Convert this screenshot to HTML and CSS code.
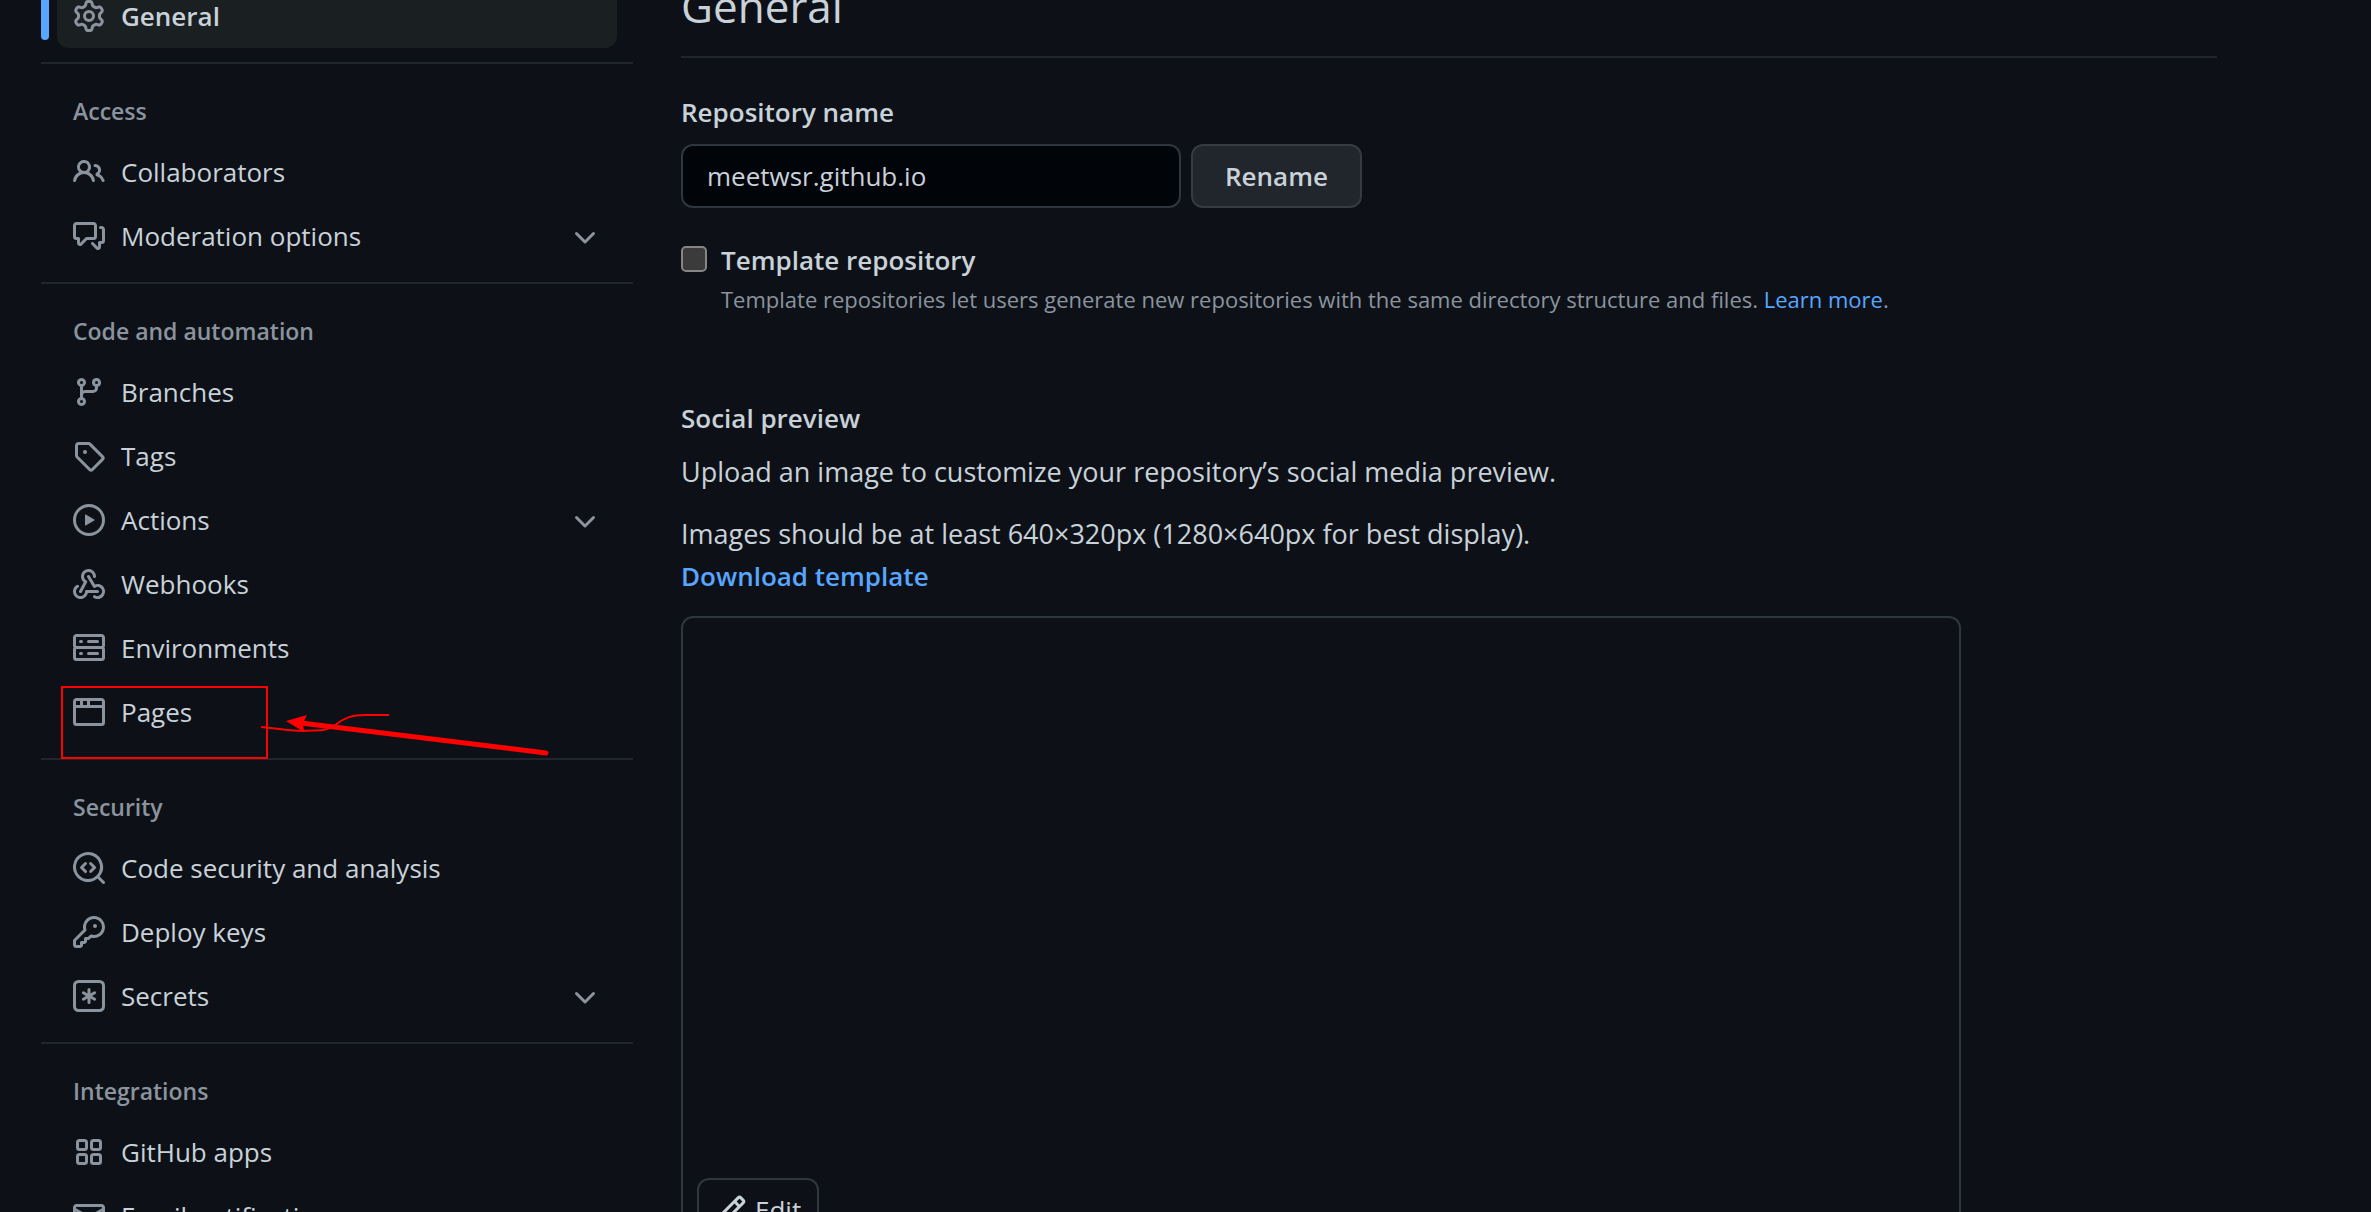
FILE: index.html
```html
<!DOCTYPE html>
<html lang="en">
<head>
<meta charset="utf-8">
<title>General settings</title>
<link rel="stylesheet" href="styles.css">
</head>
<body>
<div class="page">
  <nav class="sidebar" aria-label="Repository settings">
    <ul class="nav-list">
      <li class="nav-row nav-row-current"><a class="nav-item" href="#general" aria-current="page"><svg class="icon" viewBox="0 0 16 16"><path d="M8 0a8.2 8.2 0 0 1 .701.031C9.444.095 9.99.645 10.16 1.29l.288 1.107c.018.066.079.158.212.224.231.114.454.243.668.386.123.082.233.09.299.071l1.103-.303c.644-.176 1.392.021 1.82.63.27.385.506.792.704 1.218.315.675.111 1.422-.364 1.891l-.814.806c-.049.048-.098.147-.088.294.016.257.016.515 0 .772-.01.147.038.246.088.294l.814.806c.475.469.679 1.216.364 1.891a7.977 7.977 0 0 1-.704 1.217c-.428.61-1.176.807-1.82.63l-1.102-.302c-.067-.019-.177-.011-.3.071a5.909 5.909 0 0 1-.668.386c-.133.066-.194.158-.211.224l-.29 1.106c-.168.646-.715 1.196-1.458 1.26a8.006 8.006 0 0 1-1.402 0c-.743-.064-1.289-.614-1.458-1.26l-.289-1.106c-.018-.066-.079-.158-.212-.224a5.738 5.738 0 0 1-.668-.386c-.123-.082-.233-.09-.299-.071l-1.103.303c-.644.176-1.392-.021-1.82-.63a8.12 8.12 0 0 1-.704-1.218c-.315-.675-.111-1.422.363-1.891l.815-.806c.05-.048.098-.147.088-.294a6.214 6.214 0 0 1 0-.772c.01-.147-.038-.246-.088-.294l-.815-.806C.635 6.045.431 5.298.746 4.623a7.92 7.92 0 0 1 .704-1.217c.428-.61 1.176-.807 1.82-.63l1.102.302c.067.019.177.011.3-.071.214-.143.437-.272.668-.386.133-.066.194-.158.211-.224l.29-1.106C6.009.645 6.556.095 7.299.03 7.53.01 7.764 0 8 0Zm-.571 1.525c-.036.003-.108.036-.137.146l-.289 1.105c-.147.561-.549.967-.998 1.189-.173.086-.34.183-.5.29-.417.278-.97.423-1.529.27l-1.103-.303c-.109-.03-.175.016-.195.045-.22.312-.412.644-.573.99-.014.031-.021.11.059.19l.815.806c.411.406.562.957.53 1.456a4.709 4.709 0 0 0 0 .582c.032.499-.119 1.05-.53 1.456l-.815.806c-.081.08-.073.159-.059.19.162.346.353.677.573.989.02.03.085.076.195.046l1.102-.303c.56-.153 1.113-.008 1.53.27.161.107.328.204.501.29.447.222.85.629.997 1.189l.289 1.105c.029.109.101.143.137.146a6.6 6.6 0 0 0 1.142 0c.036-.003.108-.036.137-.146l.289-1.105c.147-.561.549-.967.998-1.189.173-.086.34-.183.5-.29.417-.278.97-.423 1.529-.27l1.103.303c.109.029.175-.016.195-.045.22-.313.411-.644.573-.99.014-.031.021-.11-.059-.19l-.815-.806c-.411-.406-.562-.957-.53-1.456a4.709 4.709 0 0 0 0-.582c-.032-.499.119-1.05.53-1.456l.815-.806c.081-.08.073-.159.059-.19a6.464 6.464 0 0 0-.573-.989c-.02-.03-.085-.076-.195-.046l-1.102.303c-.56.153-1.113.008-1.53-.27a4.44 4.44 0 0 0-.501-.29c-.447-.222-.85-.629-.997-1.189l-.289-1.105c-.029-.11-.101-.143-.137-.146a6.6 6.6 0 0 0-1.142 0ZM11 8a3 3 0 1 1-6 0 3 3 0 0 1 6 0ZM9.5 8a1.5 1.5 0 1 0-3.001.001A1.5 1.5 0 0 0 9.5 8Z"/></svg><span>General</span></a></li>
    </ul>
    <section class="nav-group">
      <h3 class="nav-title">Access</h3>
      <ul class="nav-list">
        <li class="nav-row"><a class="nav-item" href="#collaborators"><svg class="icon" viewBox="0 0 16 16"><path d="M2 5.5a3.5 3.5 0 1 1 5.898 2.549 5.508 5.508 0 0 1 3.034 4.084.75.75 0 1 1-1.482.235 4 4 0 0 0-7.9 0 .75.75 0 0 1-1.482-.236A5.507 5.507 0 0 1 3.102 8.05 3.493 3.493 0 0 1 2 5.5ZM11 4a3.001 3.001 0 0 1 2.22 5.018 5.01 5.01 0 0 1 2.56 3.012.749.749 0 0 1-.885.954.752.752 0 0 1-.549-.514 3.507 3.507 0 0 0-2.522-2.372.75.75 0 0 1-.574-.73v-.352a.75.75 0 0 1 .416-.672A1.5 1.5 0 0 0 11 5.5.75.75 0 0 1 11 4Zm-5.5-.5a2 2 0 1 0-.001 3.999A2 2 0 0 0 5.5 3.5Z"/></svg><span>Collaborators</span></a></li>
        <li class="nav-row"><button class="nav-item" type="button"><svg class="icon" viewBox="0 0 16 16"><path d="M1.75 1h8.5c.966 0 1.75.784 1.75 1.75v5.5A1.75 1.75 0 0 1 10.25 10H7.061l-2.574 2.573A1.458 1.458 0 0 1 2 11.543V10h-.25A1.75 1.75 0 0 1 0 8.25v-5.5C0 1.784.784 1 1.75 1ZM1.5 2.75v5.5c0 .138.112.25.25.25h1a.75.75 0 0 1 .75.75v2.19l2.72-2.72a.749.749 0 0 1 .53-.22h3.5a.25.25 0 0 0 .25-.25v-5.5a.25.25 0 0 0-.25-.25h-8.5a.25.25 0 0 0-.25.25Zm13 2a.25.25 0 0 0-.25-.25h-.5a.75.75 0 0 1 0-1.5h.5c.966 0 1.75.784 1.75 1.75v5.5A1.75 1.75 0 0 1 14.25 12H14v1.543a1.458 1.458 0 0 1-2.487 1.03L9.22 12.28a.749.749 0 0 1 .326-1.275.749.749 0 0 1 .734.215l2.22 2.22v-2.19a.75.75 0 0 1 .75-.75h1a.25.25 0 0 0 .25-.25Z"/></svg><span>Moderation options</span><svg class="icon chevron" viewBox="0 0 16 16"><path d="M12.78 5.22a.749.749 0 0 1 0 1.06l-4.25 4.25a.749.749 0 0 1-1.06 0L3.22 6.28a.749.749 0 1 1 1.06-1.06L8 8.939l3.72-3.719a.749.749 0 0 1 1.06 0Z"/></svg></button></li>
      </ul>
    </section>
    <section class="nav-group">
      <h3 class="nav-title">Code and automation</h3>
      <ul class="nav-list">
        <li class="nav-row"><a class="nav-item" href="#branches"><svg class="icon" viewBox="0 0 16 16"><path d="M9.5 3.25a2.25 2.25 0 1 1 3 2.122V6A2.5 2.5 0 0 1 10 8.5H6a1 1 0 0 0-1 1v1.128a2.251 2.251 0 1 1-1.5 0V5.372a2.25 2.25 0 1 1 1.5 0v1.836A2.493 2.493 0 0 1 6 7h4a1 1 0 0 0 1-1v-.628A2.25 2.25 0 0 1 9.5 3.25Zm-6 0a.75.75 0 1 0 1.5 0 .75.75 0 0 0-1.5 0Zm8.25-.75a.75.75 0 1 0 0 1.5.75.75 0 0 0 0-1.5ZM4.25 12a.75.75 0 1 0 0 1.5.75.75 0 0 0 0-1.5Z"/></svg><span>Branches</span></a></li>
        <li class="nav-row"><a class="nav-item" href="#tags"><svg class="icon" viewBox="0 0 16 16"><path d="M1 7.775V2.75C1 1.784 1.784 1 2.75 1h5.025c.464 0 .91.184 1.238.513l6.25 6.25a1.75 1.75 0 0 1 0 2.474l-5.026 5.026a1.75 1.75 0 0 1-2.474 0l-6.25-6.25A1.752 1.752 0 0 1 1 7.775Zm1.5 0c0 .066.026.13.073.177l6.25 6.25a.25.25 0 0 0 .354 0l5.025-5.025a.25.25 0 0 0 0-.354l-6.25-6.25a.25.25 0 0 0-.177-.073H2.75a.25.25 0 0 0-.25.25ZM6 5a1 1 0 1 1 0 2 1 1 0 0 1 0-2Z"/></svg><span>Tags</span></a></li>
        <li class="nav-row"><button class="nav-item" type="button"><svg class="icon" viewBox="0 0 16 16"><path d="M8 0a8 8 0 1 1 0 16A8 8 0 0 1 8 0ZM1.5 8a6.5 6.5 0 1 0 13 0 6.5 6.5 0 0 0-13 0Zm4.879-2.773 4.264 2.559a.25.25 0 0 1 0 .428l-4.264 2.559A.25.25 0 0 1 6 10.559V5.442a.25.25 0 0 1 .379-.215Z"/></svg><span>Actions</span><svg class="icon chevron" viewBox="0 0 16 16"><path d="M12.78 5.22a.749.749 0 0 1 0 1.06l-4.25 4.25a.749.749 0 0 1-1.06 0L3.22 6.28a.749.749 0 1 1 1.06-1.06L8 8.939l3.72-3.719a.749.749 0 0 1 1.06 0Z"/></svg></button></li>
        <li class="nav-row"><a class="nav-item" href="#webhooks"><svg class="icon" viewBox="0 0 16 16"><path d="M5.5 4.25a2.25 2.25 0 0 1 4.5 0 .75.75 0 0 0 1.5 0 3.75 3.75 0 1 0-6.14 2.889l-2.272 4.258a.75.75 0 0 0 1.324.706L7 7.25a.75.75 0 0 0-.309-1.015A2.25 2.25 0 0 1 5.5 4.25Z"/><path d="M7.364 3.607a.75.75 0 0 1 1.03.257l2.608 4.349a3.75 3.75 0 1 1-.628 6.785.75.75 0 0 1 .752-1.299 2.25 2.25 0 1 0-.033-3.88.75.75 0 0 1-1.03-.256L7.107 4.636a.75.75 0 0 1 .257-1.03Z"/><path d="M2.9 8.776A.75.75 0 0 1 2.625 9.8 2.25 2.25 0 1 0 6 11.75a.75.75 0 0 1 .75-.751h5.5a.75.75 0 0 1 0 1.5H7.425a3.751 3.751 0 1 1-5.55-3.998.75.75 0 0 1 1.024.274Z"/></svg><span>Webhooks</span></a></li>
        <li class="nav-row"><a class="nav-item" href="#environments"><svg class="icon" viewBox="0 0 16 16"><path d="M1.75 1h12.5c.966 0 1.75.784 1.75 1.75v4c0 .372-.116.717-.314 1 .198.283.314.628.314 1v4a1.75 1.75 0 0 1-1.75 1.75H1.75A1.75 1.75 0 0 1 0 12.75v-4c0-.358.109-.707.314-1a1.739 1.739 0 0 1-.314-1v-4C0 1.784.784 1 1.75 1ZM1.5 2.75v4c0 .138.112.25.25.25h12.5a.25.25 0 0 0 .25-.25v-4a.25.25 0 0 0-.25-.25H1.75a.25.25 0 0 0-.25.25Zm.25 5.75a.25.25 0 0 0-.25.25v4c0 .138.112.25.25.25h12.5a.25.25 0 0 0 .25-.25v-4a.25.25 0 0 0-.25-.25ZM7 4.75A.75.75 0 0 1 7.75 4h4.5a.75.75 0 0 1 0 1.5h-4.5A.75.75 0 0 1 7 4.75ZM7.75 10h4.5a.75.75 0 0 1 0 1.5h-4.5a.75.75 0 0 1 0-1.5ZM3 4.75A.75.75 0 0 1 3.75 4h.5a.75.75 0 0 1 0 1.5h-.5A.75.75 0 0 1 3 4.75ZM3.75 10h.5a.75.75 0 0 1 0 1.5h-.5a.75.75 0 0 1 0-1.5Z"/></svg><span>Environments</span></a></li>
        <li class="nav-row"><a class="nav-item" href="#pages"><svg class="icon" viewBox="0 0 16 16"><path d="M0 2.75C0 1.784.784 1 1.75 1h12.5c.966 0 1.75.784 1.75 1.75v10.5A1.75 1.75 0 0 1 14.25 15H1.75A1.75 1.75 0 0 1 0 13.25ZM14.5 6h-13v7.25c0 .138.112.25.25.25h12.5a.25.25 0 0 0 .25-.25Zm-6-3.5v2h6V2.75a.25.25 0 0 0-.25-.25ZM5 2.5v2h2v-2Zm-3.25 0a.25.25 0 0 0-.25.25V4.5h2v-2Z"/></svg><span>Pages</span></a>
          <svg class="markup" viewBox="0 0 490 76" fill="none" stroke="#f00" aria-hidden="true"><rect x="1" y="1" width="205" height="71" stroke-width="2"/><path d="M200 41C222 43 228 45 242 45C262 44 264 45 273 40C284 31 292 29 304 29H328" stroke-width="2"/><path d="M240 37L485 67" stroke-width="5" stroke-linecap="round"/><path d="M225 35L246 29L242 37L243 46Z" fill="#f00" stroke="none"/></svg></li>
      </ul>
    </section>
    <section class="nav-group">
      <h3 class="nav-title">Security</h3>
      <ul class="nav-list">
        <li class="nav-row"><a class="nav-item" href="#code-security"><svg class="icon" viewBox="0 0 16 16"><path d="M8.28 5.22a.751.751 0 0 1 1.06.018l2 2.002a.75.75 0 0 1 0 1.05l-2 2a.751.751 0 0 1-1.078-1.042L9.72 7.76 8.262 6.28a.75.75 0 0 1 .018-1.06ZM6.78 5.22a.749.749 0 0 1 0 1.06L5.31 7.76l1.47 1.48a.749.749 0 1 1-1.06 1.06l-2-2a.75.75 0 0 1 0-1.06l2-2.02a.749.749 0 0 1 1.06 0Z"/><path d="M7.5 0a7.5 7.5 0 0 1 5.807 12.247l2.473 2.473a.749.749 0 1 1-1.06 1.06l-2.473-2.473A7.5 7.5 0 1 1 7.5 0Zm-6 7.5a6 6 0 1 0 12 0 6 6 0 0 0-12 0Z"/></svg><span>Code security and analysis</span></a></li>
        <li class="nav-row"><a class="nav-item" href="#deploy-keys"><svg class="icon" viewBox="0 0 16 16"><path d="M10.5 0a5.499 5.499 0 1 1-1.288 10.848l-.932.932a.749.749 0 0 1-.53.22H7v.75a.749.749 0 0 1-.22.53l-.5.5a.749.749 0 0 1-.53.22H5v.75a.749.749 0 0 1-.22.53l-.5.5a.749.749 0 0 1-.53.22h-2A1.75 1.75 0 0 1 0 14.25v-2c0-.199.079-.389.22-.53l4.932-4.932A5.5 5.5 0 0 1 10.5 0Zm-4 5.5c-.001.431.069.86.205 1.269a.75.75 0 0 1-.181.768L1.5 12.56v1.69c0 .138.112.25.25.25h1.69l.06-.06v-1.19a.75.75 0 0 1 .75-.75h1.19l.06-.06v-1.19a.75.75 0 0 1 .75-.75h1.19l1.023-1.025a.75.75 0 0 1 .768-.18A4 4 0 1 0 6.5 5.5ZM11 6a1 1 0 1 1 0-2 1 1 0 0 1 0 2Z"/></svg><span>Deploy keys</span></a></li>
        <li class="nav-row"><button class="nav-item" type="button"><svg class="icon" viewBox="0 0 16 16"><path d="M0 2.75A2.75 2.75 0 0 1 2.75 0h10.5A2.75 2.75 0 0 1 16 2.75v10.5A2.75 2.75 0 0 1 13.25 16H2.75A2.75 2.75 0 0 1 0 13.25ZM2.75 1.5c-.69 0-1.25.56-1.25 1.25v10.5c0 .69.56 1.25 1.25 1.25h10.5c.69 0 1.25-.56 1.25-1.25V2.75c0-.69-.56-1.25-1.25-1.25Z"/><path d="M8 4a.75.75 0 0 1 .75.75V6.7l1.69-.975a.75.75 0 0 1 .75 1.3L9.5 8l1.69.976a.75.75 0 0 1-.75 1.298L8.75 9.3v1.951a.75.75 0 0 1-1.5 0V9.299l-1.69.976a.75.75 0 0 1-.75-1.3L6.5 8l-1.69-.975a.75.75 0 0 1 .75-1.3l1.69.976V4.75A.75.75 0 0 1 8 4Z"/></svg><span>Secrets</span><svg class="icon chevron" viewBox="0 0 16 16"><path d="M12.78 5.22a.749.749 0 0 1 0 1.06l-4.25 4.25a.749.749 0 0 1-1.06 0L3.22 6.28a.749.749 0 1 1 1.06-1.06L8 8.939l3.72-3.719a.749.749 0 0 1 1.06 0Z"/></svg></button></li>
      </ul>
    </section>
    <section class="nav-group">
      <h3 class="nav-title">Integrations</h3>
      <ul class="nav-list">
        <li class="nav-row"><a class="nav-item" href="#github-apps"><svg class="icon icon-stroke" viewBox="0 0 16 16"><rect x="2.25" y="2.25" width="4.5" height="4.5" rx="1"/><rect x="9.25" y="2.25" width="4.5" height="4.5" rx="1"/><rect x="2.25" y="9.25" width="4.5" height="4.5" rx="1"/><rect x="9.25" y="9.25" width="4.5" height="4.5" rx="1"/></svg><span>GitHub apps</span></a></li>
        <li class="nav-row"><a class="nav-item" href="#email"><svg class="icon" viewBox="0 0 16 16"><path d="M1.75 2h12.5c.966 0 1.75.784 1.75 1.75v8.5A1.75 1.75 0 0 1 14.25 14H1.75A1.75 1.75 0 0 1 0 12.25v-8.5C0 2.784.784 2 1.75 2ZM1.5 12.251c0 .138.112.25.25.25h12.5a.25.25 0 0 0 .25-.25V5.809L8.38 9.397a.75.75 0 0 1-.76 0L1.5 5.809v6.442Zm13-8.181v-.32a.25.25 0 0 0-.25-.25H1.75a.25.25 0 0 0-.25.25v.32L8 7.88Z"/></svg><span>Email notifications</span></a></li>
      </ul>
    </section>
  </nav>

  <main class="content">
    <h1 class="page-title">General</h1>
    <form class="rename-form">
      <label class="label" for="repo-name">Repository name</label>
      <div class="rename-row">
        <input class="text-input" id="repo-name" type="text" value="meetwsr.github.io">
        <button class="button" type="button">Rename</button>
      </div>
      <div class="check-row">
        <input class="checkbox" id="template" type="checkbox">
        <div>
          <label class="label" for="template">Template repository</label>
          <p class="note">Template repositories let users generate new repositories with the same directory structure and files. <a href="#learn">Learn more</a>.</p>
        </div>
      </div>
    </form>
    <section class="social">
      <h2 class="label">Social preview</h2>
      <p class="text">Upload an image to customize your repository’s social media preview.</p>
      <p class="text">Images should be at least 640×320px (1280×640px for best display).<br><a class="download" href="#template-file">Download template</a></p>
      <div class="preview">
        <button class="edit" type="button"><svg class="edit-icon" viewBox="0 0 16 16"><path d="M11.013 1.427a1.75 1.75 0 0 1 2.474 0l1.086 1.086a1.75 1.75 0 0 1 0 2.474l-8.61 8.61c-.21.21-.47.364-.756.445l-3.251.93a.75.75 0 0 1-.927-.928l.929-3.25c.081-.286.235-.547.445-.758l8.61-8.61Zm.176 4.823L9.75 4.81l-6.286 6.287a.253.253 0 0 0-.064.108l-.558 1.953 1.953-.558a.253.253 0 0 0 .108-.064Zm1.238-3.763a.25.25 0 0 0-.354 0L10.811 3.75l1.439 1.44 1.263-1.263a.25.25 0 0 0 0-.354Z"/></svg><span>Edit</span></button>
      </div>
    </section>
  </main>
</div>
</body>
</html>
```
FILE: styles.css
```css
* {
  box-sizing: border-box;
}

body {
  height: 100vh;
  margin: 0;
  overflow: hidden;
  background: #0d1117;
  color: #c9d1d9;
  font: 26px/42px "Open Sans", "Noto Sans", sans-serif;
}

/* The page is shown slightly scrolled: its title is cut by the top edge. */
.page {
  display: flex;
  gap: 48px;
  margin-top: -32px;
  padding: 0 154px 0 41px;
}

h1,
h2,
h3,
p,
ul {
  margin: 0;
  padding: 0;
}

ul {
  list-style: none;
}

a {
  color: #58a6ff;
  text-decoration: none;
}

button,
input {
  font: inherit;
  color: inherit;
}

.sidebar {
  flex: 0 0 592px;
  padding-top: 16px;
}

.nav-group {
  margin-top: 14px;
  padding-top: 16px;
  border-top: 2px solid #21262d;
}

.nav-title {
  padding: 13px 32px 11px;
  color: #8b949e;
  font-size: 23px;
  font-weight: 600;
  line-height: 36px;
}

.nav-row {
  position: relative;
  padding: 0 16px;
}

.nav-item {
  display: flex;
  align-items: center;
  gap: 16px;
  width: 100%;
  height: 64px;
  padding: 0 16px;
  border: 0;
  border-radius: 12px;
  background: none;
  color: #c9d1d9;
  text-align: left;
}

.nav-row-current .nav-item {
  background: #1a1f22;
  font-weight: 600;
}

.nav-row-current::before {
  content: "";
  position: absolute;
  top: 8px;
  bottom: 8px;
  left: 0;
  width: 8px;
  border-radius: 4px;
  background: #58a6ff;
}

.icon {
  flex: none;
  width: 32px;
  height: 32px;
  fill: #8b949e;
}

.icon-stroke {
  fill: none;
  stroke: #8b949e;
  stroke-width: 1.5;
}

.chevron {
  margin: 4px 0 0 auto;
}

/* Hand-drawn frame and arrow over the Pages entry. */
.markup {
  position: absolute;
  top: 6px;
  left: 20px;
  width: 490px;
  height: 76px;
  pointer-events: none;
}

.content {
  flex: 1;
  min-width: 0;
}

.page-title {
  padding: 2px 0 14px;
  border-bottom: 2px solid #21262d;
  font-size: 44px;
  font-weight: 400;
  line-height: 72px;
}

.rename-form {
  margin-top: 32px;
}

.label {
  display: block;
  padding-top: 1px;
  font-size: 26px;
  font-weight: 600;
}

.rename-row {
  display: flex;
  gap: 10px;
  margin-top: 11px;
}

.text-input {
  width: 500px;
  height: 64px;
  padding: 0 24px;
  border: 2px solid #30363d;
  border-radius: 12px;
  background: #010409;
}

.button {
  min-width: 170px;
  height: 64px;
  padding: 0 32px;
  border: 2px solid #363b42;
  border-radius: 12px;
  background: #21262d;
  font-weight: 600;
}

.check-row {
  display: flex;
  gap: 14px;
  margin-top: 30px;
}

.checkbox {
  appearance: none;
  flex: none;
  width: 26px;
  height: 26px;
  margin: 8px 0 0;
  border: 2px solid #858585;
  border-radius: 5px;
  background: #3b3b3b;
}

.note {
  color: #8b949e;
  font-size: 22px;
  line-height: 36px;
}

.social {
  margin-top: 79px;
}

.text {
  margin-top: 12px;
  font-size: 27px;
}

.text + .text {
  margin-top: 20px;
}

.download {
  font-size: 26px;
  font-weight: 600;
}

.preview {
  display: flex;
  align-items: flex-end;
  max-width: 1280px;
  height: 642px;
  margin-top: 19px;
  padding: 14px;
  border: 2px solid #30363d;
  border-radius: 12px;
}

.edit {
  display: flex;
  align-items: center;
  gap: 8px;
  height: 64px;
  padding: 0 16px;
  border: 2px solid #30363d;
  border-radius: 12px;
  background: #0d1117;
}

.edit-icon {
  width: 32px;
  height: 32px;
  fill: #c9d1d9;
}
```
